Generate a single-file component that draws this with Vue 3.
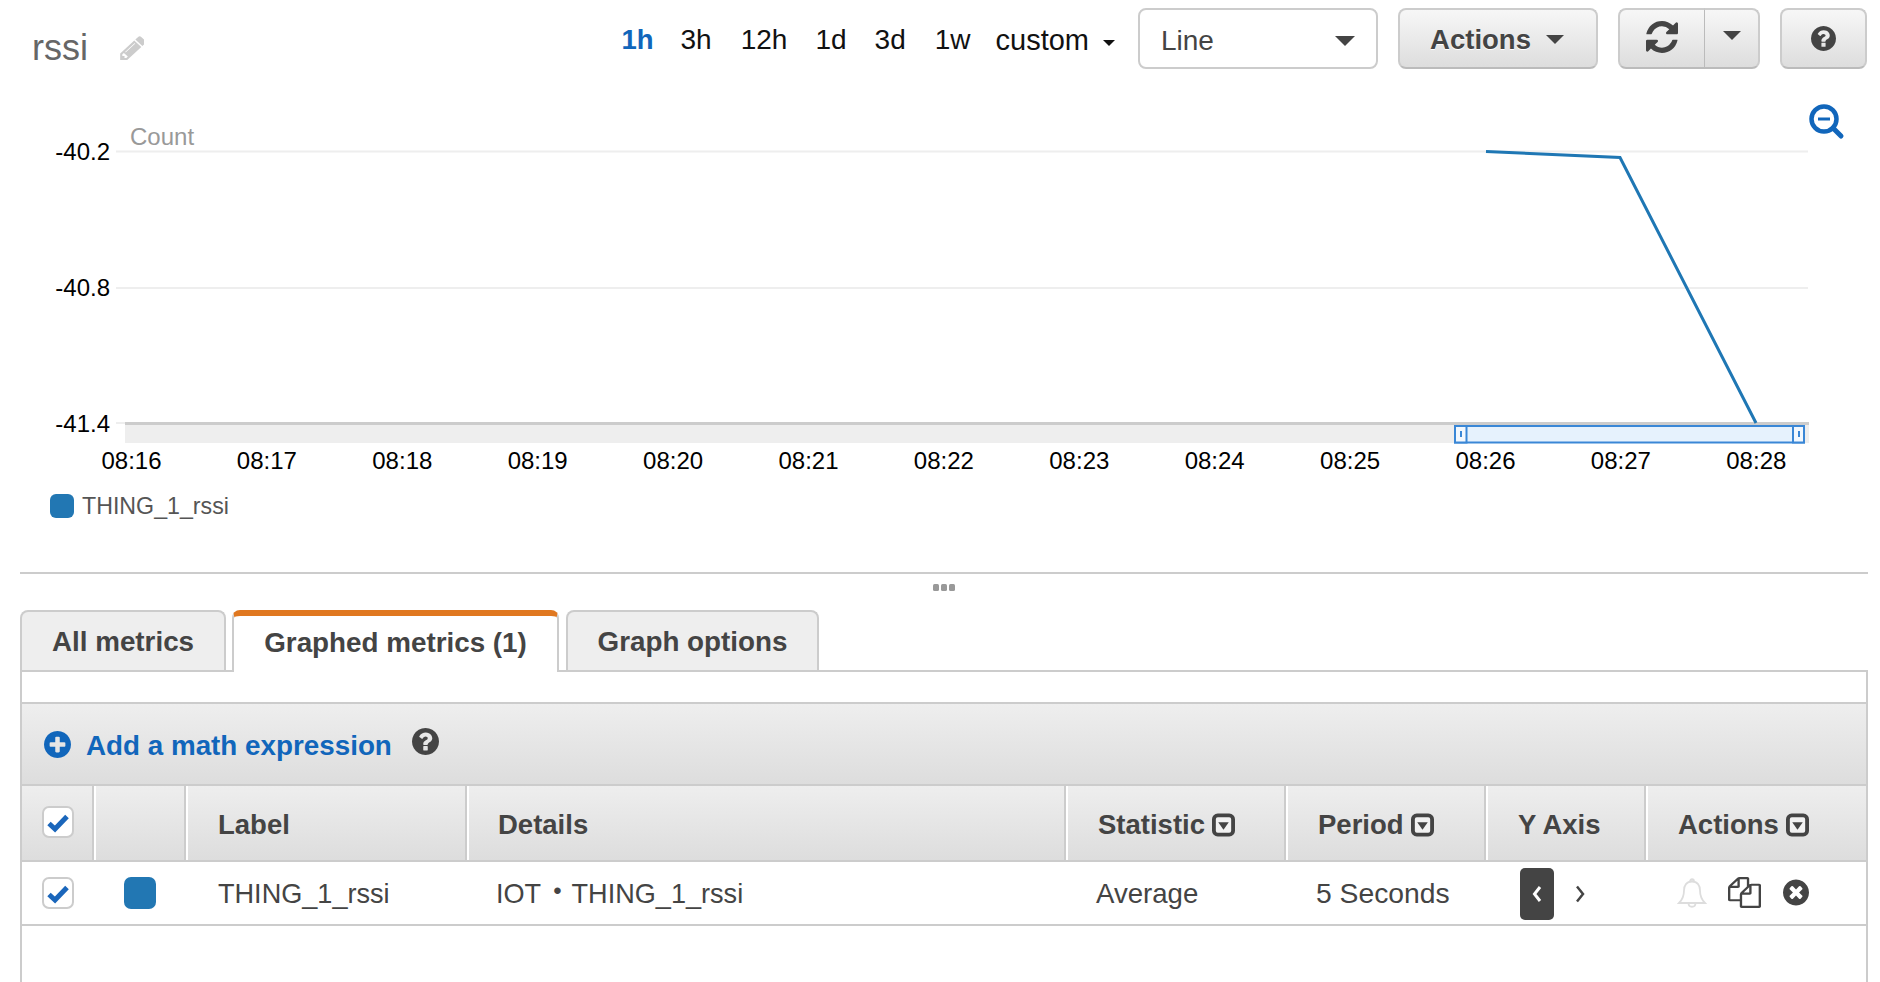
<script setup>
const ranges = [
  { label: '3h', gap: 27 },
  { label: '12h', gap: 29 },
  { label: '1d', gap: 28 },
  { label: '3d', gap: 28 },
  { label: '1w', gap: 29 }
]
const ticks = ['08:16','08:17','08:18','08:19','08:20','08:21','08:22','08:23','08:24','08:25','08:26','08:27','08:28']
  .map((label, i) => ({ label, x: 131.5 + i * 135.4 }))
const yLabels = [
  { label: '-40.2', y: 160, grid: 151.5 },
  { label: '-40.8', y: 296, grid: 288 }
]
const refresh = 'M1639 1056q0 5-1 7-64 268-268 434.5t-478 166.5q-146 0-282.5-55t-243.5-157l-129 129q-19 19-45 19t-45-19-19-45v-448q0-26 19-45t45-19h448q26 0 45 19t19 45-19 45l-137 137q71 66 161 102t187 36q134 0 250-65t186-179q11-17 53-117 8-23 30-23h192q13 0 22.5 9.5t9.5 22.5zm25-800v448q0 26-19 45t-45 19h-448q-26 0-45-19t-19-45 19-45l138-138q-148-137-349-137-134 0-250 65t-186 179q-11 17-53 117-8 23-30 23h-199q-13 0-22.5-9.5t-9.5-22.5v-7q65-268 270-434.5t480-166.5q146 0 284 55.5t245 156.5l130-129q19-19 45-19t45 19 19 45z'
const question = 'M1024 1376v-192q0-14-9-23t-23-9h-192q-14 0-23 9t-9 23v192q0 14 9 23t23 9h192q14 0 23-9t9-23zm256-672q0-88-55.5-163t-138.5-116-170-41q-243 0-371 213-15 24 8 42l132 100q7 6 19 6 16 0 25-12 53-68 86-92 34-24 86-24 48 0 85.5 26t37.5 59q0 38-20 61t-68 45q-63 28-115.5 86.5t-52.5 125.5v36q0 14 9 23t23 9h192q14 0 23-9t9-23q0-19 21.5-49.5t54.5-49.5q32-18 49-28.5t46-35 44.5-48 28-60.5 12.5-81zm384 192q0 209-103 385.5t-279.5 279.5-385.5 103-385.5-103-279.5-279.5-103-385.5 103-385.5 279.5-279.5 385.5-103 385.5 103 279.5 279.5 103 385.5z'
const times = 'M1277 1122q0-26-19-45l-181-181 181-181q19-19 19-45 0-27-19-46l-90-90q-19-19-46-19-26 0-45 19l-181 181-181-181q-19-19-45-19-27 0-46 19l-90 90q-19 19-19 46 0 26 19 45l181 181-181 181q-19 19-19 45 0 27 19 46l90 90q19 19 46 19 26 0 45-19l181-181 181 181q19 19 45 19 27 0 46-19l90-90q19-19 19-46zm387-226q0 209-103 385.5t-279.5 279.5-385.5 103-385.5-103-279.5-279.5-103-385.5 103-385.5 279.5-279.5 385.5-103 385.5 103 279.5 279.5 103 385.5z'
const plus = 'M1344 960v-128q0-26-19-45t-45-19h-256v-256q0-26-19-45t-45-19h-128q-26 0-45 19t-19 45v256h-256q-26 0-45 19t-19 45v128q0 26 19 45t45 19h256v256q0 26 19 45t45 19h128q26 0 45-19t19-45v-256h256q26 0 45-19t19-45zm320-64q0 209-103 385.5t-279.5 279.5-385.5 103-385.5-103-279.5-279.5-103-385.5 103-385.5 279.5-279.5 385.5-103 385.5 103 279.5 279.5 103 385.5z'
const pencil = 'M491 1536l91-91-235-235-91 91v107h128v128h107zm523-928q0-22-22-22-10 0-17 7l-542 542q-7 7-7 17 0 22 22 22 10 0 17-7l542-542q7-7 7-17zm-54-192l416 416-832 832h-416v-416zm683 96q0 53-37 90l-166 166-416-416 166-165q36-38 90-38 53 0 91 38l235 234q37 39 37 91z'
const files = 'M1696 384q40 0 68 28t28 68v1216q0 40-28 68t-68 28h-960q-40 0-68-28t-28-68v-288h-544q-40 0-68-28t-28-68v-672q0-40 20-88t48-76l408-408q28-28 76-48t88-20h416q40 0 68 28t28 68v328q68-40 128-40h416zm-544 213l-299 299h299v-299zm-640-384l-299 299h299v-299zm196 647l316-316v-416h-384v416q0 40-28 68t-68 28h-416v640h512v-256q0-40 20-88t48-76zm956 804v-1152h-384v416q0 40-28 68t-68 28h-416v640h896z'
</script>

<template>
  <div class="page">
    <header class="toolbar">
      <h1 class="title">rssi</h1>
      <svg class="pencil" viewBox="0 0 1536 1536" preserveAspectRatio="none"><path :d="pencil" transform="translate(0,-128)" /></svg>
      <nav class="ranges">
        <span class="range active">1h</span>
        <span v-for="r in ranges" :key="r.label" class="range" :style="{ marginLeft: r.gap + 'px' }">{{ r.label }}</span>
        <span class="range custom">custom<i class="tiny-caret"></i></span>
      </nav>
      <div class="select">Line<i class="caret big"></i></div>
      <button class="btn actions">Actions<i class="caret"></i></button>
      <div class="btn-group">
        <button class="btn refresh"><svg viewBox="128 128 1536 1536"><path :d="refresh" /></svg></button>
        <button class="btn more"><i class="caret"></i></button>
      </div>
      <button class="btn help"><svg viewBox="128 128 1536 1536"><path :d="question" /></svg></button>
    </header>

    <svg class="chart" viewBox="0 70 1880 410">
      <g class="zoom-icon">
        <circle cx="1824" cy="119" r="12.5" />
        <line x1="1833" y1="128" x2="1841" y2="136" class="handle" />
        <line x1="1818" y1="119" x2="1830" y2="119" class="minus" />
      </g>
      <text x="130" y="145" class="count">Count</text>
      <g v-for="l in yLabels" :key="l.label">
        <line x1="116" x2="1808" :y1="l.grid" :y2="l.grid" class="grid" />
        <text x="110" :y="l.y" class="axis" text-anchor="end">{{ l.label }}</text>
      </g>
      <line x1="116" x2="126" y1="423" y2="423" class="grid" />
      <text x="110" y="432" class="axis" text-anchor="end">-41.4</text>
      <rect x="125" y="425" width="1684" height="18" fill="#eee" />
      <rect x="125" y="422" width="1684" height="3" fill="#ccc" />
      <polyline points="1486,151.5 1620,157.500 1756,423" class="series" />
      <rect x="1455" y="426" width="349" height="16.5" class="brush" />
      <rect x="1455" y="426" width="11.5" height="16.5" class="brush-handle" />
      <rect x="1793" y="426" width="11" height="16.5" class="brush-handle" />
      <rect x="1460" y="431" width="2" height="6" fill="#3a87d6" />
      <rect x="1798" y="431" width="2" height="6" fill="#3a87d6" />
      <text v-for="t in ticks" :key="t.label" :x="t.x" y="469" class="axis" text-anchor="middle">{{ t.label }}</text>
    </svg>

    <div class="legend"><i class="swatch small"></i>THING_1_rssi</div>
    <div class="divider"></div>
    <div class="grip"><i></i><i></i><i></i></div>

    <div class="tabs">
      <div class="tab all">All metrics</div>
      <div class="tab selected">Graphed metrics (1)</div>
      <div class="tab options">Graph options</div>
    </div>

    <section class="panel">
      <div class="blank"></div>
      <div class="math">
        <svg class="plus" viewBox="128 128 1536 1536"><path :d="plus" /></svg>
        <a class="math-link">Add a math expression</a>
        <svg class="math-help" viewBox="128 128 1536 1536"><path :d="question" /></svg>
      </div>
      <div class="grid-row head">
        <div class="cell first"><span class="check"><svg viewBox="0 0 24 24"><path d="M3 13.5l6 5.500L21 6.500" /></svg></span></div>
        <div class="cell"></div>
        <div class="cell wide">Label</div>
        <div class="cell">Details</div>
        <div class="cell wide">Statistic<svg class="sort" viewBox="0 0 24 24"><rect x="2" y="2" width="20" height="20" rx="4" /><path d="M6.5 9h11L12 17z" /></svg></div>
        <div class="cell wide">Period<svg class="sort" viewBox="0 0 24 24"><rect x="2" y="2" width="20" height="20" rx="4" /><path d="M6.5 9h11L12 17z" /></svg></div>
        <div class="cell wide">Y Axis</div>
        <div class="cell wide last">Actions<svg class="sort" viewBox="0 0 24 24"><rect x="2" y="2" width="20" height="20" rx="4" /><path d="M6.5 9h11L12 17z" /></svg></div>
      </div>
      <div class="grid-row body">
        <div class="cell first"><span class="check"><svg viewBox="0 0 24 24"><path d="M3 13.5l6 5.500L21 6.500" /></svg></span></div>
        <div class="cell color"><i class="swatch"></i></div>
        <div class="cell name">THING_1_rssi</div>
        <div class="cell">IOT<span class="bullet">•</span>THING_1_rssi</div>
        <div class="cell wide average">Average</div>
        <div class="cell wide period">5 Seconds</div>
        <div class="cell axis-cell">
          <span class="axis-left"><svg viewBox="0 0 10 18"><path d="M8 2L2.5 9 8 16" /></svg></span>
          <svg class="axis-right" viewBox="0 0 10 18"><path d="M2 1.5L8 9l-6 7.5" /></svg>
        </div>
        <div class="cell tools">
          <svg class="bell" viewBox="0 0 30 32"><path d="M15 4.500c-5.500 0-8 4-8 9 0 5.500-1.500 9-5 12.500h26c-3.500-3.500-5-7-5-12.500 0-5-2.500-9-8-9zM13 4.500c0-3 4-3 4 0M11.500 26c0 5 7 5 7 0" /></svg>
          <svg class="copy" viewBox="0 0 1792 1792" preserveAspectRatio="none"><path :d="files" /></svg>
          <svg class="remove" viewBox="128 128 1536 1536"><path :d="times" /></svg>
        </div>
      </div>
    </section>
  </div>
</template>

<style>
html, body { margin: 0; background: #fff; }
</style>

<style scoped>
.page {
  width: 1880px;
  height: 982px;
  overflow: hidden;
  background: #fff;
  font-family: "Liberation Sans", Arial, sans-serif;
  color: #444;
}
.toolbar {
  height: 70px;
  box-sizing: border-box;
  padding: 8px 13px 0 32px;
  display: flex;
  align-items: flex-start;
}
.title {
  margin: 20px 0 0;
  font-size: 36px;
  line-height: 40px;
  font-weight: 400;
  color: #666;
}
.pencil { width: 26px; height: 24px; margin: 28px 0 0 30px; fill: #ccc; }
.ranges {
  margin-left: auto;
  display: flex;
  font-size: 28px;
  line-height: 32px;
  color: #111;
  padding-top: 16px;
}
.range.active { color: #1166bb; font-weight: 700; font-size: 27.5px; }
.custom { margin: 0 23px 0 25px; display: flex; align-items: center; font-size: 29px; }
.tiny-caret {
  margin-left: 14px;
  margin-top: 5px;
  border-left: 6px solid transparent;
  border-right: 6px solid transparent;
  border-top: 6px solid #111;
}
.select {
  width: 240px;
  height: 61px;
  box-sizing: border-box;
  border: 2px solid #ccc;
  border-radius: 8px;
  padding: 5px 21px 0 21px;
  font-size: 28px;
  line-height: 54px;
  color: #444;
  display: flex;
  justify-content: space-between;
  align-items: center;
}
.caret {
  display: block;
  border-left: 9px solid transparent;
  border-right: 9px solid transparent;
  border-top: 9px solid #444;
}
.caret.big { border-left-width: 10.5px; border-right-width: 10.5px; border-top-width: 10px; }
.btn {
  height: 61px;
  box-sizing: border-box;
  border: 2px solid #ccc;
  border-bottom-color: #bbb;
  border-radius: 8px;
  background: linear-gradient(#f7f7f7, #ddd);
  padding: 0;
  font: 700 27.5px "Liberation Sans", Arial, sans-serif;
  color: #444;
  display: flex;
  align-items: center;
  justify-content: center;
  text-shadow: 0 1px 0 #fff;
}
.actions { width: 200px; margin-left: 20px; gap: 15px; padding: 2px 2px 0 0; }
.btn-group { display: flex; margin-left: 20px; }
.refresh { width: 87px; border-radius: 8px 0 0 8px; border-right: 1px solid #bbb; }
.refresh svg { width: 32px; height: 32px; fill: #444; margin-bottom: 4px; }
.more { width: 55px; border-radius: 0 8px 8px 0; border-left: 0; padding-bottom: 6px; }
.help { width: 87px; margin-left: 20px; }
.help svg { width: 25px; height: 25px; fill: #444; margin-bottom: 1px; }

.chart { display: block; width: 1880px; height: 410px; }
.chart text { font-family: "Liberation Sans", Arial, sans-serif; }
.axis { font-size: 24px; fill: #000; }
.count { font-size: 24px; fill: #999; }
.grid { stroke: #eee; stroke-width: 2; }
.series { fill: none; stroke: #1f77b4; stroke-width: 3; }
.brush { fill: #e6f2fd; stroke: #3a87d6; stroke-width: 2; }
.brush-handle { fill: #f2f8fe; stroke: #3a87d6; stroke-width: 2; }
.zoom-icon circle { fill: none; stroke: #1166bb; stroke-width: 4.5; }
.zoom-icon .handle { stroke: #1166bb; stroke-width: 5; stroke-linecap: round; }
.zoom-icon .minus { stroke: #1166bb; stroke-width: 3; }

.legend {
  height: 24px;
  margin: 14px 0 54px 50px;
  display: flex;
  align-items: center;
  gap: 8px;
  font-size: 23.2px;
  line-height: 28px;
  color: #555;
}
.swatch { display: block; width: 32px; height: 32px; border-radius: 7px; background: #2277b3; }
.swatch.small { width: 24px; height: 24px; border-radius: 6px; }
.divider { margin-left: 20px; width: 1848px; height: 2px; background: #ccc; }
.grip {
  height: 36px;
  box-sizing: border-box;
  width: 1848px;
  margin-left: 20px;
  padding-top: 10px;
  display: flex;
  justify-content: center;
  gap: 2px;
}
.grip i { width: 6px; height: 7px; border-radius: 1.5px; background: #999; }

.tabs {
  width: 1848px;
  height: 62px;
  box-sizing: border-box;
  margin-left: 20px;
  border-bottom: 2px solid #ccc;
  display: flex;
  font-size: 27.8px;
  font-weight: 700;
}
.tab {
  height: 60px;
  box-sizing: border-box;
  border: 2px solid #ccc;
  border-bottom: 0;
  border-radius: 8px 8px 0 0;
  background: #eee;
  display: flex;
  align-items: center;
  justify-content: center;
  color: #444;
  padding-top: 2px;
}
.all { width: 206px; }
.selected {
  width: 327px;
  height: 62px;
  margin-left: 6px;
  background: #fff;
  border-top: 6px solid #e07820;
  padding: 0 0 2px;
}
.options { width: 253px; margin-left: 7px; }

.panel {
  width: 1848px;
  height: 310px;
  box-sizing: border-box;
  margin-left: 20px;
  border-left: 2px solid #ccc;
  border-right: 2px solid #ccc;
}
.blank { height: 30px; border-bottom: 2px solid #ccc; }
.math {
  box-sizing: border-box;
  height: 82px;
  border-bottom: 2px solid #ccc;
  background: linear-gradient(#eee, #ddd);
  display: flex;
  align-items: center;
  padding-left: 22px;
}
.plus { width: 27px; height: 27px; fill: #1166bb; }
.math-link { margin-left: 15px; font-size: 27.8px; font-weight: 700; color: #1166bb; padding-top: 4px; }
.math-help { width: 27px; height: 27px; margin-left: 20px; fill: #444; margin-bottom: 6px; }

.grid-row {
  display: grid;
  grid-template-columns: 72px 92px 281px 599px 220px 200px 160px 220px;
  box-sizing: border-box;
  border-bottom: 2px solid #ccc;
}
.head { height: 76px; font-size: 27.5px; font-weight: 700; }
.body { height: 64px; font-size: 27.1px; }
.cell { display: flex; align-items: center; box-sizing: border-box; padding-left: 29px; min-width: 0; white-space: nowrap; }
.cell.wide { padding-left: 30px; }
.head .cell {
  border-left: 2px solid #fff;
  border-right: 2px solid #ccc;
  background: linear-gradient(#eee, #ddd);
  padding-top: 3px;
}
.head .cell.first { border-left: 0; padding-top: 0; padding-bottom: 2px; }
.head .cell.last { border-right: 0; }
.cell.first { padding-left: 20px; }
.body .cell { padding-top: 2px; }
.body .cell.first, .body .cell.color, .body .cell.tools { padding-top: 0; }
.body .cell.name { padding-left: 32px; }
.body .cell.color { padding-left: 30px; }
.body .average { font-size: 27.6px; }
.body .cell.period { font-size: 28.3px; padding-top: 1px; }
.check {
  display: flex;
  align-items: center;
  justify-content: center;
  width: 32px;
  height: 32px;
  box-sizing: border-box;
  border: 2px solid #ccc;
  border-radius: 7px;
  background: #fff;
}
.check svg { width: 24px; height: 24px; fill: none; stroke: #1a66bb; stroke-width: 5; }
.sort { width: 23px; height: 24px; margin-left: 7px; }
.sort rect { fill: #f2f2f2; stroke: #444; stroke-width: 4; }
.sort path { fill: #444; }
.bullet { margin: -6px 10px 0 12px; font-size: 24px; }
.body .axis-cell { padding-left: 34px; }
.axis-left {
  width: 34px;
  height: 52px;
  border-radius: 5px;
  background: #444;
  display: flex;
  align-items: center;
  justify-content: center;
}
.axis-left svg { width: 10px; height: 18px; fill: none; stroke: #fff; stroke-width: 3; }
.axis-right { width: 10px; height: 18px; margin-left: 21px; fill: none; stroke: #444; stroke-width: 2.500; }
.body .tools { padding-left: 31px; }
.bell { width: 30px; height: 34px; fill: none; stroke: #ddd; stroke-width: 1.800; }
.copy { width: 33px; height: 31px; margin: 0 0 2px 21px; fill: #444; }
.remove { width: 26px; height: 27px; margin: 0 0 2px 22px; fill: #444; }
</style>
